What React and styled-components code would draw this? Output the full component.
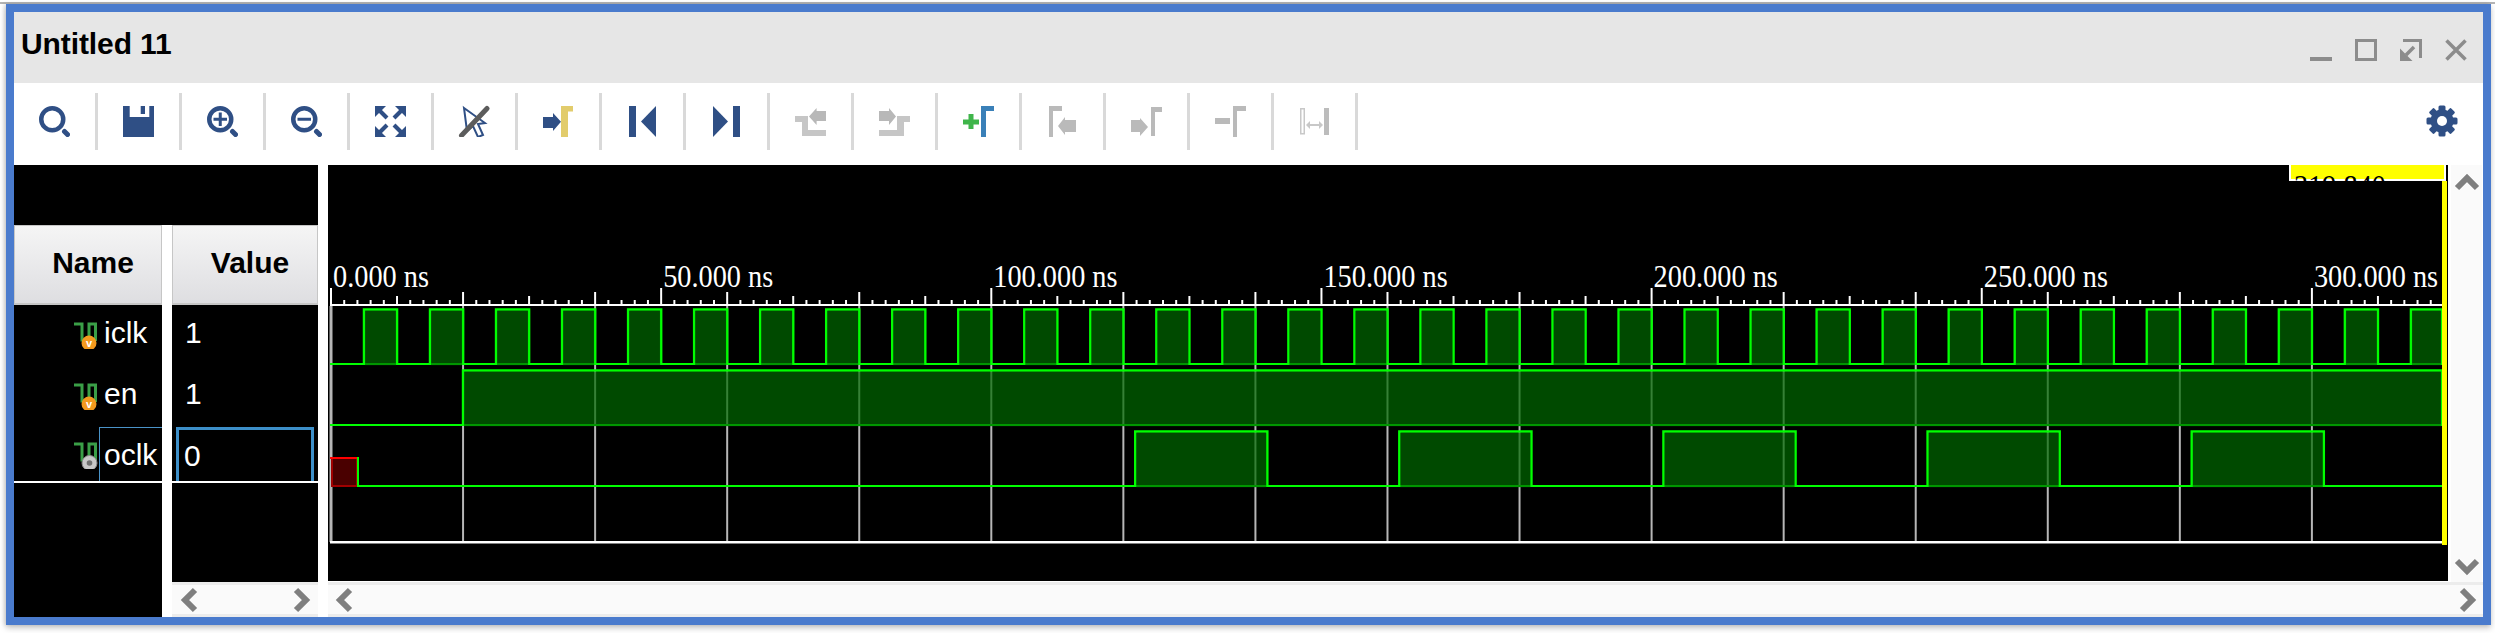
import React from "react";
import styled, { createGlobalStyle } from "styled-components";

const Global = createGlobalStyle`
  html, body { margin: 0; padding: 0; background: #fff; }
  body { width: 2495px; height: 633px; overflow: hidden; font-family: "Liberation Sans", Arial, sans-serif; }
`;

const Page = styled.div`
  width: 2495px;
  height: 633px;
  box-sizing: border-box;
  background: #fff;
  overflow: hidden;
`;
const TopStrip = styled.div`
  height: 2px;
  margin-top: 2px;
  background: #b4b4b4;
`;
const Window = styled.div`
  margin-left: 6px;
  width: 2485px;
  height: 621px;
  box-sizing: border-box;
  border: 8px solid #4a7bcd;
  background: #fff;
  box-shadow: 0 3px 6px rgba(0, 0, 0, 0.22), -2px 0 4px rgba(0, 0, 0, 0.12);
  display: flex;
  flex-direction: column;
`;
const TitleBar = styled.div`
  height: 71px;
  flex: none;
  background: #e6e6e6;
  display: flex;
  align-items: center;
  padding: 0 16px 0 7px;
`;
const Title = styled.div`
  font-size: 30px;
  font-weight: 700;
  color: #000;
  letter-spacing: -0.1px;
  margin-bottom: 7px;
`;
const WinControls = styled.div`
  margin-left: auto;
  margin-top: 5px;
  display: flex;
  gap: 23px;
`;
const WinIcon = styled.svg`
  width: 22px;
  height: 22px;
  display: block;
  color: #8c8c8c;
`;
const Toolbar = styled.div`
  height: 82px;
  flex: none;
  box-sizing: border-box;
  background: #fff;
  padding-top: 10px;
  display: flex;
  align-items: flex-start;
`;
const ToolButton = styled.div`
  width: 84px;
  height: 57px;
  box-sizing: border-box;
  border-right: 3px solid #d9d9d9;
  padding: 12px 1px 0 0;
  display: flex;
  justify-content: center;
`;
const GearSlot = styled.div`
  margin-left: auto;
  padding: 12px 25px 0 0;
`;
const Icon = styled.svg`
  width: 32px;
  height: 32px;
  display: block;
  color: ${(p) => (p.$muted ? "#bababa" : "#2f4f85")};
`;
const Main = styled.div`
  flex: 1;
  min-height: 0;
  display: flex;
  gap: 10px;
`;
const LeftPanel = styled.div`
  width: 304px;
  flex: none;
  display: flex;
  flex-direction: column;
`;
const LeftTop = styled.div`
  height: 60px;
  flex: none;
  background: #000;
`;
const Columns = styled.div`
  flex: 1;
  display: flex;
  gap: 10px;
`;
const NameColumn = styled.div`
  width: 148px;
  flex: none;
  background: #000;
  display: flex;
  flex-direction: column;
`;
const ValueColumn = styled.div`
  width: 146px;
  flex: none;
  display: flex;
  flex-direction: column;
`;
const ValueBody = styled.div`
  height: 357px;
  flex: none;
  background: #000;
  display: flex;
  flex-direction: column;
`;
const Header = styled.div`
  height: 80px;
  flex: none;
  box-sizing: border-box;
  border: 1px solid #c6c6c6;
  border-bottom-width: 2px;
  background: linear-gradient(#f5f5f5, #dedee1);
  display: flex;
  align-items: center;
  justify-content: center;
  padding: 0 0 4px 10px;
  font-size: 30px;
  font-weight: 700;
  color: #000;
`;
const NameRow = styled.div`
  height: ${(p) => p.$h}px;
  flex: none;
  box-sizing: border-box;
  padding-left: 60px;
  display: flex;
  align-items: stretch;
  color: #fff;
  font-size: 30px;
  border-bottom: ${(p) => (p.$last ? "2px solid #fff" : "0")};
`;
const SignalIcon = styled.svg`
  width: 25px;
  height: 30px;
  flex: none;
  align-self: center;
  margin-top: ${(p) => p.$shift || 0}px;
`;
const NameLabel = styled.div`
  flex: 1;
  display: flex;
  align-items: center;
  padding-left: ${(p) => (p.$selected ? 4 : 5)}px;
  padding-top: ${(p) => (p.$selected ? 1 : 0)}px;
  padding-bottom: ${(p) => (p.$selected ? 0 : 5)}px;
  border-top: ${(p) => (p.$selected ? "1px solid #4a93c8" : "0")};
  border-left: ${(p) => (p.$selected ? "1px solid #4a93c8" : "0")};
`;
const ValueRow = styled.div`
  height: ${(p) => p.$h}px;
  flex: none;
  box-sizing: border-box;
  padding-left: 13px;
  display: flex;
  align-items: center;
  padding-bottom: 5px;
  color: #fff;
  font-size: 30px;
  border-bottom: ${(p) => (p.$last ? "2px solid #fff" : "0")};
`;
const ValueBox = styled.div`
  flex: 1;
  align-self: stretch;
  margin: 0 4px -5px -9px;
  padding: 1px 0 0 5px;
  border: 3px solid #3d8fc9;
  border-bottom: 0;
  display: flex;
  align-items: center;
`;
const HScroll = styled.div`
  height: 35px;
  flex: none;
  box-sizing: border-box;
  background: #fafafa;
  border-top: 3px solid #ececec;
  border-bottom: 3px solid #ececec;
  display: flex;
  align-items: center;
  justify-content: space-between;
  padding: 0 ${(p) => p.$right || 7}px 0 ${(p) => p.$left || 8}px;
`;
const Chevron = styled.svg`
  width: 20px;
  height: 26px;
  display: block;
  color: #7f7f7f;
  transform: rotate(${(p) => p.$turn || 0}deg);
`;
const WaveColumn = styled.div`
  flex: 1;
  display: flex;
  flex-direction: column;
  min-width: 0;
`;
const WaveRow = styled.div`
  height: 417px;
  flex: none;
  display: flex;
`;
const WaveSvg = styled.svg`
  width: 2120px;
  height: 416px;
  flex: none;
  display: block;
  background: #000;
`;
const VScroll = styled.div`
  width: 31px;
  margin-left: 3px;
  height: 417px;
  background: #fafafa;
  display: flex;
  flex-direction: column;
  align-items: center;
  justify-content: space-between;
  padding: 5px 0 3px;
  box-sizing: border-box;
`;
const TimeLabel = styled.text`
  font-family: "Liberation Serif", "Times New Roman", serif;
  font-size: 31px;
  fill: ${(p) => p.$fill || "#fff"};
`;
const BadgeText = styled.text`
  font-family: "Liberation Sans", Arial, sans-serif;
  font-size: 11px;
  font-weight: 700;
  fill: #fff;
  text-anchor: middle;
`;

const Magnifier = ({ children }) => (
  <Icon viewBox="0 0 32 32">
    <circle cx="14.25" cy="14.25" r="11" fill="none" stroke="currentColor" strokeWidth="4.5" />
    <line x1="26.5" y1="26.5" x2="29.5" y2="29.5" stroke="currentColor" strokeWidth="5" strokeLinecap="round" />
    {children}
  </Icon>
);
const SaveIcon = () => (
  <Icon viewBox="0 0 32 32">
    <path fill="currentColor" d="M1 1H7.7V12H27.3V1H32V32H1Z" />
    <rect x="18.7" y="1" width="4.3" height="8" fill="currentColor" />
  </Icon>
);
const FitIcon = () => (
  <Icon viewBox="0 0 32 32">
    {[
      "",
      "translate(33 0) scale(-1 1)",
      "translate(0 33) scale(1 -1)",
      "translate(33 33) scale(-1 -1)",
    ].map((tr) => (
      <g key={tr} transform={tr}>
        <polygon points="1,1 12,1 1,12" fill="currentColor" />
        <line x1="5" y1="5" x2="13" y2="13" stroke="currentColor" strokeWidth="4" />
      </g>
    ))}
  </Icon>
);
const CursorIcon = () => (
  <Icon viewBox="0 0 32 32">
    <polygon points="6,3 27,18 20,19 25,30 20,32 15,21 9,26" fill="#fff" stroke="currentColor" strokeWidth="2" />
    <line x1="3.5" y1="30.5" x2="29" y2="3.5" stroke="#5c5c5c" strokeWidth="5" strokeLinecap="round" />
  </Icon>
);
const GoMarkerIcon = () => (
  <Icon viewBox="0 0 32 32">
    <path fill="currentColor" d="M1 12H11V8L19 16.8 11 26V23H1Z" />
    <path fill="#e2cc6c" d="M19 1H31V6.5H26V32H19Z" />
  </Icon>
);
const FirstIcon = () => (
  <Icon viewBox="0 0 32 32">
    <rect x="3" y="1" width="7" height="31" fill="currentColor" />
    <polygon points="15,16.5 30,1 30,32" fill="currentColor" />
  </Icon>
);
const LastIcon = () => (
  <Icon viewBox="0 0 32 32">
    <polygon points="3,1 18,16.5 3,32" fill="currentColor" />
    <rect x="23" y="1" width="7" height="31" fill="currentColor" />
  </Icon>
);
const PrevTransIcon = () => (
  <Icon viewBox="0 0 32 32">
    <path fill="#c6c6c6" d="M1 11H14V25H32V31H8V17H1Z" />
    <path fill="#b8b8b8" d="M15 11.5L22.6 3V6H32V16H22.6V20Z" />
  </Icon>
);
const NextTransIcon = () => (
  <Icon viewBox="0 0 32 32">
    <path fill="#c6c6c6" d="M32 11H19V25H1V31H26V17H32Z" />
    <path fill="#b8b8b8" d="M1 6H11V3L18 11.5 11 20V16H1Z" />
  </Icon>
);
const AddMarkerIcon = () => (
  <Icon viewBox="0 0 32 32">
    <path fill="#3fb54a" d="M6.5 9H11.5V14.5H17V19.5H11.5V24H6.5V19.5H1V14.5H6.5Z" />
    <path fill="#3a80b8" d="M19 1H32V6H24V32H19Z" />
  </Icon>
);
const PrevMarkerIcon = () => (
  <Icon $muted viewBox="0 0 32 32">
    <path fill="currentColor" d="M3 1H16V6H7V32H3Z" />
    <path fill="currentColor" d="M12 21L19 12V15H30V27H19V30Z" />
  </Icon>
);
const NextMarkerIcon = () => (
  <Icon $muted viewBox="0 0 32 32">
    <path fill="currentColor" d="M1 15H10V13L18 22 10 31V27H1Z" />
    <path fill="currentColor" d="M21 2H32V7H25V31H21Z" />
  </Icon>
);
const DeleteMarkerIcon = () => (
  <Icon $muted viewBox="0 0 32 32">
    <rect x="1" y="13" width="15" height="6" fill="currentColor" />
    <path fill="currentColor" d="M19 1H32V6H23V32H19Z" />
  </Icon>
);
const SwapIcon = () => (
  <Icon $muted viewBox="0 0 32 32">
    <rect x="2.75" y="3.75" width="3.5" height="25" fill="none" stroke="#c8c8c8" strokeWidth="1.5" />
    <rect x="26" y="3" width="5" height="27" fill="#bcbcbc" />
    <path fill="#c8c8c8" d="M8 20L12 16V19H21V16L25 20 21 24V21H12V24Z" />
  </Icon>
);
const GearIcon = () => (
  <Icon viewBox="0 0 32 32">
    {[0, 45, 90, 135].map((a) => (
      <rect key={a} x="12.5" y="0.5" width="7" height="31" rx="1.5" fill="currentColor" transform={`rotate(${a} 16 16)`} />
    ))}
    <circle cx="16" cy="16" r="11.5" fill="currentColor" />
    <circle cx="16" cy="16" r="5" fill="#fff" />
  </Icon>
);

const tools = [
  <Magnifier key="a" />,
  <SaveIcon key="b" />,
  <Magnifier key="c">
    <path d="M14.25 7.5V21M7.5 14.25H21" stroke="currentColor" strokeWidth="3" />
  </Magnifier>,
  <Magnifier key="d">
    <path d="M7.5 14.25H21" stroke="currentColor" strokeWidth="3" />
  </Magnifier>,
  <FitIcon key="e" />,
  <CursorIcon key="f" />,
  <GoMarkerIcon key="g" />,
  <FirstIcon key="h" />,
  <LastIcon key="i" />,
  <PrevTransIcon key="j" />,
  <NextTransIcon key="k" />,
  <AddMarkerIcon key="l" />,
  <PrevMarkerIcon key="m" />,
  <NextMarkerIcon key="n" />,
  <DeleteMarkerIcon key="o" />,
  <SwapIcon key="p" />,
];

const ChevronGlyph = ({ turn }) => (
  <Chevron viewBox="0 0 20 26" $turn={turn}>
    <polyline points="15,3 5,13 15,23" fill="none" stroke="currentColor" strokeWidth="6" />
  </Chevron>
);

const Signal = ({ input, shift }) => (
  <SignalIcon viewBox="0 0 25 30" $shift={shift}>
    <path d="M0 5H8V21H15V5H21.5V22" fill="none" stroke="#3a9f47" strokeWidth="3" />
    {input ? (
      <>
        <circle cx="15" cy="24" r="7.5" fill="#f39a1e" />
        <BadgeText x="15" y="28">v</BadgeText>
      </>
    ) : (
      <>
        <circle cx="15.5" cy="24" r="7.5" fill="#c8c8c8" stroke="#8a8a8a" strokeWidth="1" />
        <circle cx="15.5" cy="24" r="2.8" fill="#707070" />
      </>
    )}
  </SignalIcon>
);

const t = (ns) => 331 + 6.603 * ns;
const END = 2442;
const GREEN = "#00ff00";
const labelWidth = (text) => {
  const ems = [...text].reduce((sum, c) => sum + (c === "." || c === " " ? 0.25 : c === "s" ? 0.39 : 0.5), 0);
  return ems * 28.3;
};

const Pulse = ({ from, to, top, low }) => {
  const a = t(from);
  const b = Math.min(t(to), END);
  return (
    <g>
      <polyline
        points={`${a},${low} ${a},${top} ${b},${top} ${b},${low}`}
        fill="none"
        stroke={GREEN}
        strokeWidth="2.5"
      />
      <rect x={a + 1} y={top + 1.2} width={Math.max(0, b - a - 2)} height={low - top} fill="#006a00" fillOpacity="0.7" />
    </g>
  );
};

const iclkPulses = [];
for (let k = 0; t(5 + 10 * k) < END; k++) iclkPulses.push([5 + 10 * k, 10 + 10 * k]);
const oclkPulses = [];
for (let k = 0; t(121.8 + 40 * k) < END; k++) oclkPulses.push([121.8 + 40 * k, 141.8 + 40 * k]);

const ticks = [];
for (let n = 0; t(n) < END; n += 2) {
  const h = n % 50 === 0 ? 17 : n % 20 === 0 ? 13 : n % 10 === 0 ? 9 : 5;
  ticks.push({ n, h });
}
const grid = [];
for (let n = 0; t(n) < END; n += 20) grid.push(n);
const labels = [0, 50, 100, 150, 200, 250, 300];

const Waveform = () => (
  <WaveSvg viewBox="328 165 2120 416">
    <defs>
      <clipPath id="labelClip">
        <rect x="2291" y="165" width="153" height="16" />
      </clipPath>
    </defs>
    {labels.map((n) => {
      const text = `${n}.000 ns`;
      return (
        <TimeLabel key={n} x={t(n) + 2} y="287" textLength={labelWidth(text)} lengthAdjust="spacingAndGlyphs">
          {text}
        </TimeLabel>
      );
    })}
    {ticks.map(({ n, h }) => (
      <line key={n} x1={t(n)} x2={t(n)} y1={305 - h} y2={305} stroke="#fff" strokeWidth="2" />
    ))}
    <rect x="330" y="304" width="2112" height="2" fill="#fff" />
    {grid.map((n) => (
      <line key={n} x1={t(n)} x2={t(n)} y1="306" y2="542" stroke="#b6b6b6" strokeWidth={n === 0 ? 3 : 2} />
    ))}
    <rect x="330" y="541" width="2112" height="2.5" fill="#fff" />

    <line x1="330" x2={END} y1="364" y2="364" stroke={GREEN} strokeWidth="2" />
    {iclkPulses.map(([a, b]) => (
      <Pulse key={a} from={a} to={b} top={309.5} low={364} />
    ))}

    <line x1="330" x2={END} y1="425" y2="425" stroke={GREEN} strokeWidth="2" />
    <Pulse from={20} to={330} top={370.5} low={425} />

    <line x1="358" x2={END} y1="486" y2="486" stroke={GREEN} strokeWidth="2" />
    <rect x="332" y="458" width="25" height="28" fill="#4a0000" stroke="#a00000" strokeWidth="2" />
    <line x1="330" x2="358" y1="458" y2="458" stroke="#ff0000" strokeWidth="2" />
    <line x1="358" x2="358" y1="457" y2="487" stroke={GREEN} strokeWidth="2" />
    {oclkPulses.map(([a, b]) => (
      <Pulse key={a} from={a} to={b} top={431.5} low={486} />
    ))}

    <rect x="2442" y="181" width="5" height="364" fill="#ffff00" />
    <rect x="2289" y="165" width="157" height="16" fill="#fff" />
    <rect x="2291" y="165" width="153" height="14" fill="#ffff00" />
    <g clipPath="url(#labelClip)">
      <TimeLabel x="2294" y="197" $fill="#000" textLength={labelWidth("319.840 ns")} lengthAdjust="spacingAndGlyphs">
        319.840 ns
      </TimeLabel>
    </g>
  </WaveSvg>
);

export default function App() {
  return (
    <Page>
      <Global />
      <TopStrip />
      <Window>
        <TitleBar>
          <Title>Untitled 11</Title>
          <WinControls>
            <WinIcon viewBox="0 0 22 22">
              <rect x="0" y="18" width="22" height="4" fill="currentColor" />
            </WinIcon>
            <WinIcon viewBox="0 0 22 22">
              <rect x="1.5" y="1.5" width="19" height="19" fill="none" stroke="currentColor" strokeWidth="3" />
            </WinIcon>
            <WinIcon viewBox="0 0 22 22">
              <path d="M3 1.5H20.5V19" fill="none" stroke="currentColor" strokeWidth="3" />
              <path d="M14 8L6 16" stroke="currentColor" strokeWidth="3.5" />
              <path fill="currentColor" d="M0 9.5L0 22H12.5Z" />
            </WinIcon>
            <WinIcon viewBox="0 0 22 22">
              <path d="M1.5 1.5L20.5 20.5M20.5 1.5L1.5 20.5" stroke="currentColor" strokeWidth="3.5" />
            </WinIcon>
          </WinControls>
        </TitleBar>
        <Toolbar>
          {tools.map((icon, i) => (
            <ToolButton key={i}>{icon}</ToolButton>
          ))}
          <GearSlot>
            <GearIcon />
          </GearSlot>
        </Toolbar>
        <Main>
          <LeftPanel>
            <LeftTop />
            <Columns>
              <NameColumn>
                <Header>Name</Header>
                <NameRow $h={61}>
                  <Signal input shift={-3} />
                  <NameLabel>iclk</NameLabel>
                </NameRow>
                <NameRow $h={61}>
                  <Signal input shift={-3} />
                  <NameLabel>en</NameLabel>
                </NameRow>
                <NameRow $h={56} $last>
                  <Signal shift={-1} />
                  <NameLabel $selected>oclk</NameLabel>
                </NameRow>
              </NameColumn>
              <ValueColumn>
                <ValueBody>
                  <Header>Value</Header>
                  <ValueRow $h={61}>1</ValueRow>
                  <ValueRow $h={61}>1</ValueRow>
                  <ValueRow $h={56} $last>
                    <ValueBox>0</ValueBox>
                  </ValueRow>
                </ValueBody>
                <HScroll>
                  <ChevronGlyph />
                  <ChevronGlyph turn={180} />
                </HScroll>
              </ValueColumn>
            </Columns>
          </LeftPanel>
          <WaveColumn>
            <WaveRow>
              <Waveform />
              <VScroll>
                <ChevronGlyph turn={90} />
                <ChevronGlyph turn={270} />
              </VScroll>
            </WaveRow>
            <HScroll $left={7} $right={6}>
              <ChevronGlyph />
              <ChevronGlyph turn={180} />
            </HScroll>
          </WaveColumn>
        </Main>
      </Window>
    </Page>
  );
}
